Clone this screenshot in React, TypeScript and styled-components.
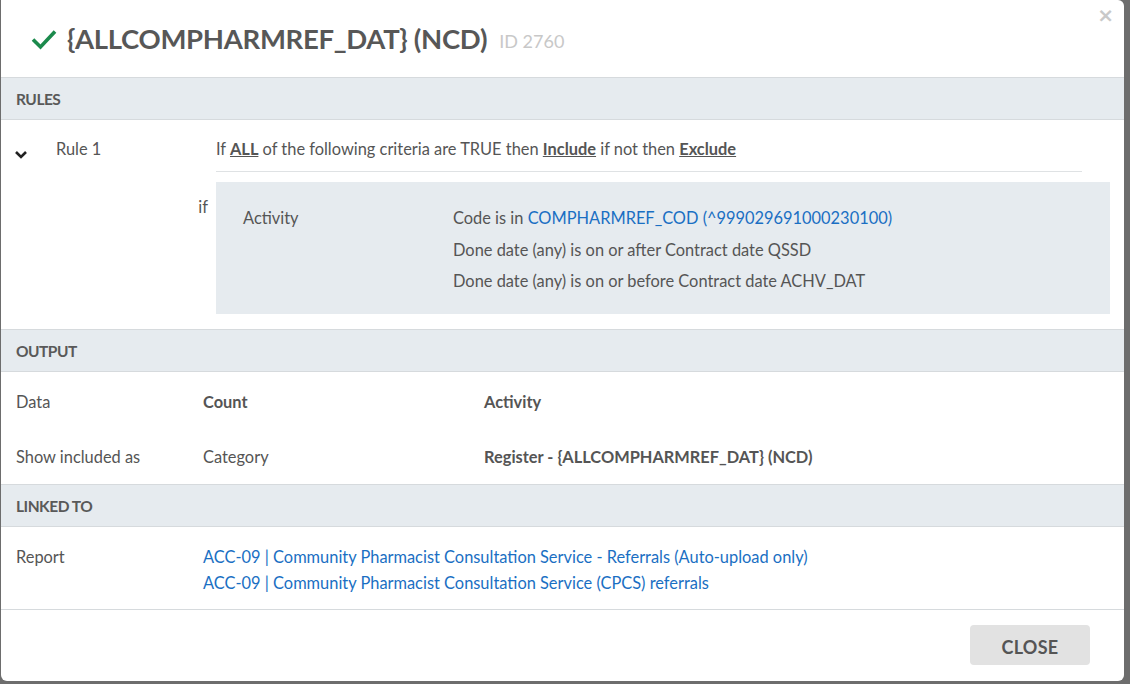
import React from "react";
import styled, { createGlobalStyle } from "styled-components";

const Global = createGlobalStyle`
  html, body { margin: 0; padding: 0; }
  body {
    background: #6d6d6d;
    font-family: "Lato", "Liberation Sans", sans-serif;
    color: #555;
    width: 1130px;
    height: 684px;
    overflow: hidden;
  }
`;

const Modal = styled.div`
  position: relative;
  margin-left: 1px;
  width: 1123px;
  height: 681px;
  background: #fff;
  border-radius: 0 6px 6px 6px;
  display: flex;
  flex-direction: column;
  overflow: hidden;
`;

const Header = styled.div`
  height: 77px;
  flex-shrink: 0;
  display: flex;
  align-items: center;
  padding: 0 0 0 30px;
  gap: 10px;
  box-sizing: border-box;
`;

const Title = styled.h1`
  margin: 0;
  font-size: 27.5px;
  font-weight: 700;
  color: #575757;
  letter-spacing: -0.3px;
`;

const IdTag = styled.span`
  font-size: 18px;
  color: #c8c8c8;
  margin-left: 2px;
  margin-top: 4px;
`;

const CloseX = styled.span`
  position: absolute;
  top: 3px;
  right: 10px;
  font-size: 20px;
  font-weight: 700;
  color: #c9c9c9;
  font-family: "DejaVu Sans", sans-serif;
`;

const SectionHead = styled.div`
  height: 43px;
  flex-shrink: 0;
  border-top: 1px solid #d6dadd;
  border-bottom: 1px solid #d6dadd;
  background: #e6ebef;
  display: flex;
  align-items: center;
  padding-left: 15px;
  font-weight: 700;
  font-size: 15.5px;
  letter-spacing: -0.5px;
  color: #595959;
  box-sizing: border-box;
`;

const RulesBody = styled.div`
  display: grid;
  grid-template-columns: 42px 160px 1fr;
  padding: 17px 14px 15px 13px;
  font-size: 16.4px;
  line-height: 20px;
`;

const Chevron = styled.div`
  padding-top: 7px;
`;

const RuleName = styled.div`
  padding-top: 2px;
`;

const Statement = styled.div`
  padding-top: 2px;
  padding-bottom: 12px;
  margin-right: 28px;
  border-bottom: 1px solid #dfe2e4;
  b {
    text-decoration: underline;
    font-weight: 700;
  }
`;

const IfLabel = styled.div`
  grid-column: 2;
  text-align: right;
  padding-right: 8px;
  padding-top: 25px;
`;

const CriteriaBox = styled.div`
  margin-top: 10px;
  height: 132px;
  box-sizing: border-box;
  background: #e6ebef;
  display: grid;
  grid-template-columns: 210px 1fr;
  align-content: start;
  padding: 20px 26px 0 27px;
  line-height: 31.5px;
`;

const Link = styled.a`
  color: #1a6fc3;
  text-decoration: none;
`;

const OutputBody = styled.div`
  display: grid;
  grid-template-columns: 187px 281px 1fr;
  grid-template-rows: 56px 55px;
  padding: 1px 15px 0 15px;
  font-size: 16.4px;
  align-items: center;
`;

const Cell = styled.div<{ $bold?: boolean }>`
  font-weight: ${(p) => (p.$bold ? 700 : 400)};
`;

const LinkedBody = styled.div`
  display: grid;
  grid-template-columns: 187px 1fr;
  padding: 17px 15px 13px 15px;
  font-size: 16.4px;
  line-height: 26px;
  border-bottom: 1px solid #d6dadd;
`;

const LinkList = styled.div`
  display: flex;
  flex-direction: column;
`;

const Footer = styled.div`
  display: flex;
  justify-content: flex-end;
  padding: 15px 34px 0 0;
`;

const Button = styled.button`
  width: 120px;
  height: 40px;
  border: none;
  border-radius: 4px;
  background: #e2e2e2;
  color: #555;
  font-family: inherit;
  font-size: 18px;
  font-weight: 700;
  letter-spacing: 0.3px;
  padding: 3px 0 0 0;
`;

export default function App() {
  return (
    <>
      <Global />
      <Modal>
        <CloseX>×</CloseX>
        <Header>
          <svg width="26" height="22" viewBox="0 0 26 22">
            <path d="M2 11.5 L9.5 19 L24 3.5" fill="none" stroke="#1b8a4c" strokeWidth="3.6" />
          </svg>
          <Title>{"{ALLCOMPHARMREF_DAT} (NCD)"}</Title>
          <IdTag>ID 2760</IdTag>
        </Header>
        <SectionHead>RULES</SectionHead>
        <RulesBody>
          <Chevron>
            <svg width="14" height="10" viewBox="0 0 14 10">
              <path d="M2 2 L7 7 L12 2" fill="none" stroke="#222" strokeWidth="2.6" />
            </svg>
          </Chevron>
          <RuleName>Rule 1</RuleName>
          <Statement>
            If <b>ALL</b> of the following criteria are TRUE then <b>Include</b> if not then <b>Exclude</b>
          </Statement>
          <IfLabel>if</IfLabel>
          <CriteriaBox>
            <div>Activity</div>
            <div>
              <div>
                Code is in <Link>COMPHARMREF_COD (^999029691000230100)</Link>
              </div>
              <div>Done date (any) is on or after Contract date QSSD</div>
              <div>Done date (any) is on or before Contract date ACHV_DAT</div>
            </div>
          </CriteriaBox>
        </RulesBody>
        <SectionHead>OUTPUT</SectionHead>
        <OutputBody>
          <Cell>Data</Cell>
          <Cell $bold>Count</Cell>
          <Cell $bold>Activity</Cell>
          <Cell>Show included as</Cell>
          <Cell>Category</Cell>
          <Cell $bold>{"Register - {ALLCOMPHARMREF_DAT} (NCD)"}</Cell>
        </OutputBody>
        <SectionHead>LINKED TO</SectionHead>
        <LinkedBody>
          <div>Report</div>
          <LinkList>
            <Link>ACC-09 | Community Pharmacist Consultation Service - Referrals (Auto-upload only)</Link>
            <Link>ACC-09 | Community Pharmacist Consultation Service (CPCS) referrals</Link>
          </LinkList>
        </LinkedBody>
        <Footer>
          <Button>CLOSE</Button>
        </Footer>
      </Modal>
    </>
  );
}
